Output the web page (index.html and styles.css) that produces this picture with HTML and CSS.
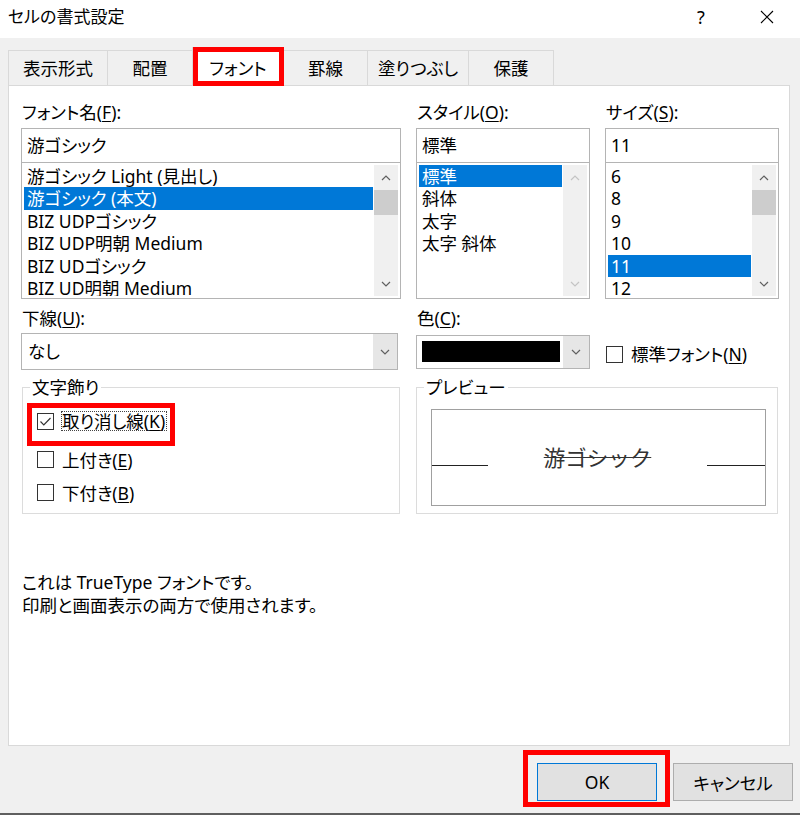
FILE: index.html
```html
<!DOCTYPE html>
<html lang="ja">
<head>
<meta charset="utf-8">
<title>セルの書式設定</title>
<link rel="stylesheet" href="styles.css">
</head>
<body>
<div class="titlebar">
  <span class="title">セルの書式設定</span>
  <span class="ctl help">?</span>
  <span class="ctl close"><svg width="14" height="14" viewBox="0 0 14 14"><path d="M1 1L13 13M13 1L1 13" stroke="#000" stroke-width="1.1" fill="none"/></svg></span>
</div>

<div class="tabs">
  <div class="tab t1">表示形式</div>
  <div class="tab t2">配置</div>
  <div class="tab t3 active">フォント<span class="hl hl-tab"></span></div>
  <div class="tab t4">罫線</div>
  <div class="tab t5">塗りつぶし</div>
  <div class="tab t6">保護</div>
</div>

<div class="panel">
  <div class="row1">
    <div class="col">
      <div class="lbl">フォント名(<u>F</u>):</div>
      <div class="input">游ゴシック</div>
      <div class="list">
        <div class="items">
          <div class="item">游ゴシック Light (見出し)</div>
          <div class="item sel">游ゴシック (本文)</div>
          <div class="item">BIZ UDPゴシック</div>
          <div class="item">BIZ UDP明朝 Medium</div>
          <div class="item">BIZ UDゴシック</div>
          <div class="item">BIZ UD明朝 Medium</div>
        </div>
        <div class="sb">
          <div class="sb-btn"><svg width="10" height="6" viewBox="0 0 10 6"><path d="M1 5L5 1L9 5" fill="none" stroke="#606060" stroke-width="1.2"/></svg></div>
          <div class="sb-track"><div class="sb-thumb"></div></div>
          <div class="sb-btn"><svg width="10" height="6" viewBox="0 0 10 6"><path d="M1 1L5 5L9 1" fill="none" stroke="#606060" stroke-width="1.2"/></svg></div>
        </div>
      </div>
    </div>
    <div class="col">
      <div class="lbl">スタイル(<u>O</u>):</div>
      <div class="input">標準</div>
      <div class="list">
        <div class="items">
          <div class="item sel">標準</div>
          <div class="item">斜体</div>
          <div class="item">太字</div>
          <div class="item">太字 斜体</div>
        </div>
        <div class="sb">
          <div class="sb-btn"><svg width="10" height="6" viewBox="0 0 10 6"><path d="M1 5L5 1L9 5" fill="none" stroke="#c4c4c4" stroke-width="1.2"/></svg></div>
          <div class="sb-track"></div>
          <div class="sb-btn"><svg width="10" height="6" viewBox="0 0 10 6"><path d="M1 1L5 5L9 1" fill="none" stroke="#c4c4c4" stroke-width="1.2"/></svg></div>
        </div>
      </div>
    </div>
    <div class="col">
      <div class="lbl">サイズ(<u>S</u>):</div>
      <div class="input">11</div>
      <div class="list">
        <div class="items">
          <div class="item">6</div>
          <div class="item">8</div>
          <div class="item">9</div>
          <div class="item">10</div>
          <div class="item sel">11</div>
          <div class="item">12</div>
        </div>
        <div class="sb">
          <div class="sb-btn"><svg width="10" height="6" viewBox="0 0 10 6"><path d="M1 5L5 1L9 5" fill="none" stroke="#606060" stroke-width="1.2"/></svg></div>
          <div class="sb-track"><div class="sb-thumb"></div></div>
          <div class="sb-btn"><svg width="10" height="6" viewBox="0 0 10 6"><path d="M1 1L5 5L9 1" fill="none" stroke="#606060" stroke-width="1.2"/></svg></div>
        </div>
      </div>
    </div>
  </div>

  <div class="row2">
    <div class="col">
      <div class="lbl">下線(<u>U</u>):</div>
      <div class="dd">
        <div class="dd-text">なし</div>
        <div class="dd-btn"><svg width="10" height="6" viewBox="0 0 10 6"><path d="M1 1L5 5L9 1" fill="none" stroke="#606060" stroke-width="1.2"/></svg></div>
      </div>
    </div>
    <div class="col">
      <div class="lbl">色(<u>C</u>):</div>
      <div class="dd dd-color">
        <div class="swatch"></div>
        <div class="dd-btn"><svg width="10" height="6" viewBox="0 0 10 6"><path d="M1 1L5 5L9 1" fill="none" stroke="#606060" stroke-width="1.2"/></svg></div>
      </div>
    </div>
    <div class="col stdcol">
      <div class="cbrow">
        <span class="cb"></span>
        <span class="cbtext">標準フォント(<u>N</u>)</span>
      </div>
    </div>
  </div>

  <div class="row3">
    <fieldset class="fs fs1">
      <legend>文字飾り</legend>
      <div class="cbrow r1">
        <span class="cb"><svg width="15" height="15" viewBox="0 0 15 15"><path d="M2.5 7.5L5.8 10.8L12.5 4" fill="none" stroke="#333" stroke-width="1.2"/></svg></span>
        <span class="cbtext focus">取り消し線(<u>K</u>)</span>
        <span class="hl hl-cb"></span>
      </div>
      <div class="cbrow r2">
        <span class="cb"></span>
        <span class="cbtext">上付き(<u>E</u>)</span>
      </div>
      <div class="cbrow r3">
        <span class="cb"></span>
        <span class="cbtext">下付き(<u>B</u>)</span>
      </div>
    </fieldset>
    <fieldset class="fs fs2">
      <legend>プレビュー</legend>
      <div class="preview">
        <div class="pline"></div>
        <div class="ptext">游ゴシック</div>
        <div class="pline"></div>
      </div>
    </fieldset>
  </div>

  <div class="info">
    <div>これは TrueType フォントです。</div>
    <div>印刷と画面表示の両方で使用されます。</div>
  </div>
</div>

<div class="footer">
  <button class="btn ok">OK<span class="hl hl-ok"></span></button>
  <button class="btn">キャンセル</button>
</div>
</body>
</html>
```

FILE: styles.css
```css
* { box-sizing: border-box; }
html, body { margin: 0; padding: 0; }
body {
  width: 800px;
  height: 815px;
  overflow: hidden;
  background: #f0f0f0;
  font-family: "Noto Sans", "Noto Sans CJK JP", sans-serif;
  font-size: 17.5px;
  font-feature-settings: "palt";
  color: #000;
  display: flex;
  flex-direction: column;
}
u { text-decoration-thickness: 1px; text-underline-offset: 2px; }

.titlebar {
  height: 38px;
  background: #fff;
  display: flex;
  align-items: flex-start;
  flex: none;
}
.title { flex: 1; padding-left: 8px; line-height: 34px; font-size: 17px; }
.ctl { width: 66px; height: 34px; display: flex; align-items: center; justify-content: center; }
.help { font-size: 18px; }

.tabs {
  height: 48px;
  margin-bottom: -1px;
  padding-left: 8px;
  display: flex;
  align-items: flex-end;
  position: relative;
  z-index: 1;
  flex: none;
}
.tab {
  height: 35px;
  margin-bottom: 1px;
  margin-right: -1px;
  border: 1px solid #d9d9d9;
  border-bottom: none;
  background: #f0f0f0;
  text-align: center;
  line-height: 34px;
  white-space: nowrap;
}
.t1 { width: 100px; }
.t2 { width: 86px; }
.t3 { width: 92px; }
.t4 { width: 85px; }
.t5 { width: 102px; }
.t6 { width: 86px; }
.tab.active {
  height: 39px;
  margin-bottom: 0;
  padding-top: 3px;
  background: #fff;
  position: relative;
}

.hl { position: absolute; border: 5px solid #f00; pointer-events: none; }
.hl-tab { top: -1px; left: 0; right: -1px; bottom: 0; }
.hl-cb { left: -10px; top: -6px; right: -8px; bottom: -13px; }
.hl-ok { left: -15px; right: -14px; top: -14px; bottom: -7px; }

.panel {
  height: 661px;
  margin: 0 10px 0 8px;
  background: #fff;
  border: 1px solid #d9d9d9;
  padding: 16px 0 0 12px;
  flex: none;
}

.row1, .row2 {
  display: grid;
  grid-template-columns: 380px 174px 174px;
  column-gap: 15px;
}
.lbl { height: 20px; line-height: 20px; margin-left: 1px; white-space: nowrap; }
.input {
  margin-top: 6px;
  height: 35px;
  border: 1px solid #b4b4b4;
  padding-left: 5px;
  line-height: 33px;
  white-space: nowrap;
}
.list {
  margin-top: -1px;
  height: 137px;
  border: 1px solid #b4b4b4;
  padding: 2px;
  display: flex;
}
.items { flex: 1; margin-right: 1px; overflow: hidden; }
.item { height: 22.4px; line-height: 22.4px; padding-left: 3px; white-space: nowrap; }
.item.sel { background: #0078d7; color: #fff; }
.sb { width: 24px; background: #f0f0f0; display: flex; flex-direction: column; }
.sb-btn { height: 25px; display: flex; align-items: center; justify-content: center; flex: none; }
.sb-track { flex: 1; }
.sb-thumb { height: 25px; background: #cdcdcd; }

.row2 { margin-top: 9px; }
.dd {
  margin-top: 5px;
  height: 37px;
  width: 377px;
  border: 1px solid #b4b4b4;
  display: flex;
}
.dd-text { flex: 1; padding-left: 6px; line-height: 35px; }
.dd-btn {
  width: 24px;
  background: #e6e6e6;
  display: flex;
  align-items: center;
  justify-content: center;
}
.dd-color { margin-top: 7px; height: 34px; width: 174px; }
.dd-color .dd-btn { width: 26px; }
.swatch { flex: 1; margin: 5px 3px 6px 5px; background: #000; }

.stdcol { padding-top: 34px; }
.cbrow { display: flex; align-items: center; height: 24px; }
.cb {
  width: 17px;
  height: 17px;
  border: 1px solid #333;
  background: #fff;
  flex: none;
  display: flex;
  align-items: center;
  justify-content: center;
}
.cbtext { margin-left: 8px; white-space: nowrap; line-height: 20px; }
.stdcol .cbrow { margin-left: 1px; }

.row3 {
  display: grid;
  grid-template-columns: 380px 363px;
  column-gap: 15px;
  margin-top: 7px;
}
.fs {
  margin: 0;
  border: 1px solid #dcdcdc;
  height: 137px;
  min-width: 0;
}
.fs legend { padding: 0 2px; margin-left: -7px; line-height: 20px; height: 20px; }
.fs1 { width: 378px; margin-left: 1px; padding: 12px 0 0 14px; }
.r1 { display: inline-flex; position: relative; }
.r2 { margin-top: 14px; }
.r3 { margin-top: 9px; }
.focus { margin-left: 7px; border: 1px dotted #444; line-height: 18px; padding: 0 1px 0 0; }
.fs2 { width: 362px; padding: 12px 0 0 14px; }

.preview {
  width: 335px;
  height: 97px;
  border: 1px solid #a0a0a0;
  display: grid;
  grid-template-columns: 56px 1fr 58px;
  align-items: end;
  padding-bottom: 39px;
}
.pline { height: 1px; background: #222; }
.ptext {
  text-align: center;
  font-family: "Noto Sans CJK JP", sans-serif;
  font-feature-settings: normal;
  font-size: 21.5px;
  line-height: 24px;
  color: #333;
  text-decoration: line-through;
  text-decoration-thickness: 1px;
  margin-bottom: -3px;
}

.info { margin-top: 57px; margin-left: 1px; line-height: 23px; }

.footer {
  flex: 1;
  display: flex;
  justify-content: flex-end;
  align-items: flex-start;
  gap: 16px;
  padding: 17px 7px 0 0;
  border-bottom: 2px solid #5f5f5f;
}
.btn {
  width: 120px;
  height: 38px;
  background: #e1e1e1;
  border: 1px solid #adadad;
  font: inherit;
  color: #000;
  padding: 0;
}
.btn.ok { border-color: #0078d7; position: relative; }
```
